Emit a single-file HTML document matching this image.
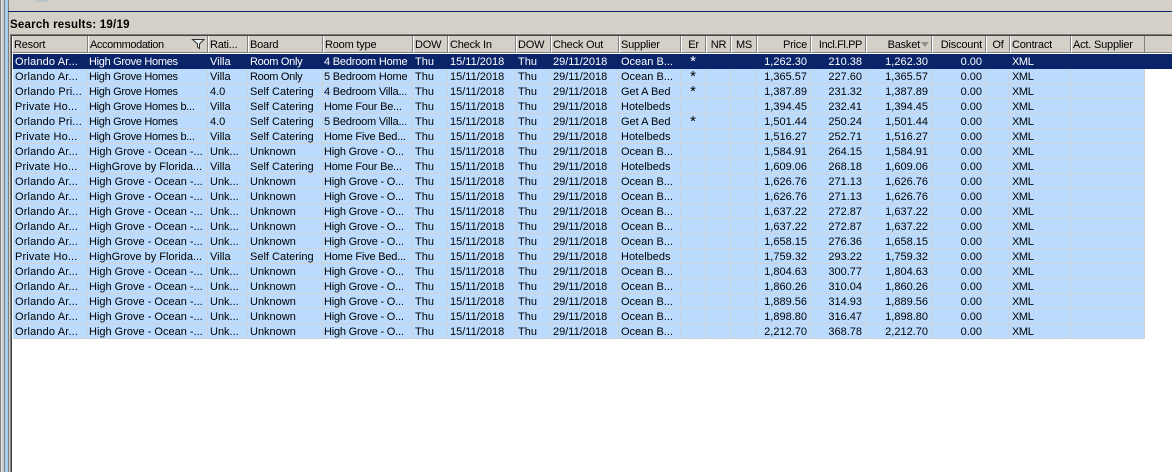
<!DOCTYPE html>
<html><head><meta charset="utf-8"><style>
html,body{margin:0;padding:0;width:1172px;height:472px;overflow:hidden;background:#d4d0c8;font-family:"Liberation Sans",sans-serif;font-size:11px;color:#000}
.a{position:absolute}
table{position:absolute;border-collapse:separate;border-spacing:0;table-layout:fixed}
#g{left:13px;top:54px;width:1132px}
#g td{line-height:12px;padding:2px 0 0 2px;box-sizing:border-box;height:15px;white-space:nowrap;overflow:hidden;background:#bcdcff;border-right:1px solid #cfd2d6;border-bottom:1px solid #cfd2d6}
#g tr.s td{background:#0a246a;color:#fff;border-color:#0a246a}
#g td.r{text-align:right;padding:2px 3px 0 0}
#g td:nth-child(1){letter-spacing:.15px}
#g td:nth-child(2){padding-left:1px}
#g td:nth-child(5){padding-left:1px;letter-spacing:-.2px}
#g td:nth-child(11){text-align:center;padding:2px 0 0;font-size:15px}
#g td:nth-child(19){letter-spacing:-.4px}
#g td.h{letter-spacing:-.3px}
#h{left:12px;top:36px;width:1133px}
#h td{height:17px;box-sizing:border-box;padding:2px 0 0 1px;letter-spacing:-.2px;background:#d4d0c8;white-space:nowrap;overflow:hidden;border-right:1px solid #808080;border-left:1px solid #fff;border-bottom:1px solid #808080}
#h td.r{text-align:right;padding:2px 3px 0 0}
#h td.c{text-align:center;padding:2px 0 0}
</style></head><body>
<div class="a" style="left:0;top:0;width:1px;height:472px;background:#808080"></div>
<div class="a" style="left:1px;top:0;width:1px;height:472px;background:#e8e8e8"></div>
<div class="a" style="left:2px;top:0;width:2px;height:472px;background:#c8c8c8"></div>
<div class="a" style="left:4px;top:0;width:1px;height:472px;background:#808080"></div>
<div class="a" style="left:5px;top:0;width:3px;height:472px;background:#a6caf0"></div>
<div class="a" style="left:8px;top:0;width:1px;height:472px;background:#808080"></div>
<div class="a" style="left:36px;top:0;width:12px;height:2px;background:#b8c4c8"></div>
<div class="a" style="left:8px;top:11px;width:1164px;height:1px;background:#0a246a"></div>
<div class="a" style="left:10px;top:19px;font-weight:bold;font-size:11.5px;line-height:13px;letter-spacing:.22px;white-space:nowrap">Search results: 19/19</div>
<div class="a" style="left:10px;top:34px;width:1162px;height:438px;background:#fff"></div>
<div class="a" style="left:10px;top:34px;width:1162px;height:1px;background:#808080"></div>
<div class="a" style="left:11px;top:35px;width:1161px;height:1px;background:#404040"></div>
<div class="a" style="left:10px;top:34px;width:1px;height:438px;background:#808080"></div>
<div class="a" style="left:11px;top:35px;width:1px;height:437px;background:#404040"></div>
<div class="a" style="left:12px;top:36px;width:1160px;height:17px;background:#d4d0c8;border-bottom:1px solid #808080;box-sizing:border-box"></div>
<div class="a" style="left:13px;top:54px;width:1159px;height:15px;background:#0a246a"></div>
<table id="h"><colgroup><col style="width:76px"><col style="width:120px"><col style="width:40px"><col style="width:75px"><col style="width:90px"><col style="width:35px"><col style="width:68px"><col style="width:35px"><col style="width:68px"><col style="width:62px"><col style="width:25px"><col style="width:25px"><col style="width:26px"><col style="width:54px"><col style="width:55px"><col style="width:66px"><col style="width:54px"><col style="width:24px"><col style="width:61px"><col style="width:74px"></colgroup>
<tr><td>Resort</td><td style="letter-spacing:-.4px">Accommodation</td><td>Rati...</td><td>Board</td><td>Room type</td><td>DOW</td><td>Check In</td><td>DOW</td><td>Check Out</td><td>Supplier</td><td class="c">Er</td><td class="c">NR</td><td class="c">MS</td><td class="r">Price</td><td class="r" style="letter-spacing:-.4px">Incl.Fl.PP</td><td class="r" style="padding-right:11px">Basket</td><td class="r">Discount</td><td class="c">Of</td><td>Contract</td><td>Act. Supplier</td></tr></table>
<svg class="a" style="left:191px;top:38px" width="15" height="12" viewBox="0 0 15 12"><path d="M1.5 1.5H13L8.5 6V10.5L6.5 9V6Z" fill="#e8f0f4" stroke="#303030" stroke-width="1"/></svg>
<svg class="a" style="left:921px;top:42px" width="8" height="5"><path d="M0 0H8L4 5Z" fill="#909090"/></svg>
<table id="g"><colgroup><col style="width:75px"><col style="width:120px"><col style="width:40px"><col style="width:75px"><col style="width:90px"><col style="width:35px"><col style="width:68px"><col style="width:35px"><col style="width:68px"><col style="width:62px"><col style="width:25px"><col style="width:25px"><col style="width:26px"><col style="width:54px"><col style="width:55px"><col style="width:66px"><col style="width:54px"><col style="width:24px"><col style="width:61px"><col style="width:74px"></colgroup>
<tr class="s"><td>Orlando Ar...</td><td class="h">High Grove Homes</td><td>Villa</td><td class="h">Room Only</td><td>4 Bedroom Home</td><td>Thu</td><td>15/11/2018</td><td>Thu</td><td>29/11/2018</td><td>Ocean B...</td><td>*</td><td></td><td></td><td class="r">1,262.30</td><td class="r">210.38</td><td class="r">1,262.30</td><td class="r">0.00</td><td></td><td>XML</td><td></td></tr>
<tr><td>Orlando Ar...</td><td class="h">High Grove Homes</td><td>Villa</td><td class="h">Room Only</td><td>5 Bedroom Home</td><td>Thu</td><td>15/11/2018</td><td>Thu</td><td>29/11/2018</td><td>Ocean B...</td><td>*</td><td></td><td></td><td class="r">1,365.57</td><td class="r">227.60</td><td class="r">1,365.57</td><td class="r">0.00</td><td></td><td>XML</td><td></td></tr>
<tr><td>Orlando Pri...</td><td class="h">High Grove Homes</td><td>4.0</td><td>Self Catering</td><td>4 Bedroom Villa...</td><td>Thu</td><td>15/11/2018</td><td>Thu</td><td>29/11/2018</td><td>Get A Bed</td><td>*</td><td></td><td></td><td class="r">1,387.89</td><td class="r">231.32</td><td class="r">1,387.89</td><td class="r">0.00</td><td></td><td>XML</td><td></td></tr>
<tr><td>Private Ho...</td><td class="h">High Grove Homes b...</td><td>Villa</td><td>Self Catering</td><td>Home Four Be...</td><td>Thu</td><td>15/11/2018</td><td>Thu</td><td>29/11/2018</td><td>Hotelbeds</td><td></td><td></td><td></td><td class="r">1,394.45</td><td class="r">232.41</td><td class="r">1,394.45</td><td class="r">0.00</td><td></td><td>XML</td><td></td></tr>
<tr><td>Orlando Pri...</td><td class="h">High Grove Homes</td><td>4.0</td><td>Self Catering</td><td>5 Bedroom Villa...</td><td>Thu</td><td>15/11/2018</td><td>Thu</td><td>29/11/2018</td><td>Get A Bed</td><td>*</td><td></td><td></td><td class="r">1,501.44</td><td class="r">250.24</td><td class="r">1,501.44</td><td class="r">0.00</td><td></td><td>XML</td><td></td></tr>
<tr><td>Private Ho...</td><td class="h">High Grove Homes b...</td><td>Villa</td><td>Self Catering</td><td>Home Five Bed...</td><td>Thu</td><td>15/11/2018</td><td>Thu</td><td>29/11/2018</td><td>Hotelbeds</td><td></td><td></td><td></td><td class="r">1,516.27</td><td class="r">252.71</td><td class="r">1,516.27</td><td class="r">0.00</td><td></td><td>XML</td><td></td></tr>
<tr><td>Orlando Ar...</td><td>High Grove - Ocean -...</td><td>Unk...</td><td>Unknown</td><td>High Grove - O...</td><td>Thu</td><td>15/11/2018</td><td>Thu</td><td>29/11/2018</td><td>Ocean B...</td><td></td><td></td><td></td><td class="r">1,584.91</td><td class="r">264.15</td><td class="r">1,584.91</td><td class="r">0.00</td><td></td><td>XML</td><td></td></tr>
<tr><td>Private Ho...</td><td>HighGrove by Florida...</td><td>Villa</td><td>Self Catering</td><td>Home Four Be...</td><td>Thu</td><td>15/11/2018</td><td>Thu</td><td>29/11/2018</td><td>Hotelbeds</td><td></td><td></td><td></td><td class="r">1,609.06</td><td class="r">268.18</td><td class="r">1,609.06</td><td class="r">0.00</td><td></td><td>XML</td><td></td></tr>
<tr><td>Orlando Ar...</td><td>High Grove - Ocean -...</td><td>Unk...</td><td>Unknown</td><td>High Grove - O...</td><td>Thu</td><td>15/11/2018</td><td>Thu</td><td>29/11/2018</td><td>Ocean B...</td><td></td><td></td><td></td><td class="r">1,626.76</td><td class="r">271.13</td><td class="r">1,626.76</td><td class="r">0.00</td><td></td><td>XML</td><td></td></tr>
<tr><td>Orlando Ar...</td><td>High Grove - Ocean -...</td><td>Unk...</td><td>Unknown</td><td>High Grove - O...</td><td>Thu</td><td>15/11/2018</td><td>Thu</td><td>29/11/2018</td><td>Ocean B...</td><td></td><td></td><td></td><td class="r">1,626.76</td><td class="r">271.13</td><td class="r">1,626.76</td><td class="r">0.00</td><td></td><td>XML</td><td></td></tr>
<tr><td>Orlando Ar...</td><td>High Grove - Ocean -...</td><td>Unk...</td><td>Unknown</td><td>High Grove - O...</td><td>Thu</td><td>15/11/2018</td><td>Thu</td><td>29/11/2018</td><td>Ocean B...</td><td></td><td></td><td></td><td class="r">1,637.22</td><td class="r">272.87</td><td class="r">1,637.22</td><td class="r">0.00</td><td></td><td>XML</td><td></td></tr>
<tr><td>Orlando Ar...</td><td>High Grove - Ocean -...</td><td>Unk...</td><td>Unknown</td><td>High Grove - O...</td><td>Thu</td><td>15/11/2018</td><td>Thu</td><td>29/11/2018</td><td>Ocean B...</td><td></td><td></td><td></td><td class="r">1,637.22</td><td class="r">272.87</td><td class="r">1,637.22</td><td class="r">0.00</td><td></td><td>XML</td><td></td></tr>
<tr><td>Orlando Ar...</td><td>High Grove - Ocean -...</td><td>Unk...</td><td>Unknown</td><td>High Grove - O...</td><td>Thu</td><td>15/11/2018</td><td>Thu</td><td>29/11/2018</td><td>Ocean B...</td><td></td><td></td><td></td><td class="r">1,658.15</td><td class="r">276.36</td><td class="r">1,658.15</td><td class="r">0.00</td><td></td><td>XML</td><td></td></tr>
<tr><td>Private Ho...</td><td>HighGrove by Florida...</td><td>Villa</td><td>Self Catering</td><td>Home Five Bed...</td><td>Thu</td><td>15/11/2018</td><td>Thu</td><td>29/11/2018</td><td>Hotelbeds</td><td></td><td></td><td></td><td class="r">1,759.32</td><td class="r">293.22</td><td class="r">1,759.32</td><td class="r">0.00</td><td></td><td>XML</td><td></td></tr>
<tr><td>Orlando Ar...</td><td>High Grove - Ocean -...</td><td>Unk...</td><td>Unknown</td><td>High Grove - O...</td><td>Thu</td><td>15/11/2018</td><td>Thu</td><td>29/11/2018</td><td>Ocean B...</td><td></td><td></td><td></td><td class="r">1,804.63</td><td class="r">300.77</td><td class="r">1,804.63</td><td class="r">0.00</td><td></td><td>XML</td><td></td></tr>
<tr><td>Orlando Ar...</td><td>High Grove - Ocean -...</td><td>Unk...</td><td>Unknown</td><td>High Grove - O...</td><td>Thu</td><td>15/11/2018</td><td>Thu</td><td>29/11/2018</td><td>Ocean B...</td><td></td><td></td><td></td><td class="r">1,860.26</td><td class="r">310.04</td><td class="r">1,860.26</td><td class="r">0.00</td><td></td><td>XML</td><td></td></tr>
<tr><td>Orlando Ar...</td><td>High Grove - Ocean -...</td><td>Unk...</td><td>Unknown</td><td>High Grove - O...</td><td>Thu</td><td>15/11/2018</td><td>Thu</td><td>29/11/2018</td><td>Ocean B...</td><td></td><td></td><td></td><td class="r">1,889.56</td><td class="r">314.93</td><td class="r">1,889.56</td><td class="r">0.00</td><td></td><td>XML</td><td></td></tr>
<tr><td>Orlando Ar...</td><td>High Grove - Ocean -...</td><td>Unk...</td><td>Unknown</td><td>High Grove - O...</td><td>Thu</td><td>15/11/2018</td><td>Thu</td><td>29/11/2018</td><td>Ocean B...</td><td></td><td></td><td></td><td class="r">1,898.80</td><td class="r">316.47</td><td class="r">1,898.80</td><td class="r">0.00</td><td></td><td>XML</td><td></td></tr>
<tr><td>Orlando Ar...</td><td>High Grove - Ocean -...</td><td>Unk...</td><td>Unknown</td><td>High Grove - O...</td><td>Thu</td><td>15/11/2018</td><td>Thu</td><td>29/11/2018</td><td>Ocean B...</td><td></td><td></td><td></td><td class="r">2,212.70</td><td class="r">368.78</td><td class="r">2,212.70</td><td class="r">0.00</td><td></td><td>XML</td><td></td></tr>
</table>
</body></html>
